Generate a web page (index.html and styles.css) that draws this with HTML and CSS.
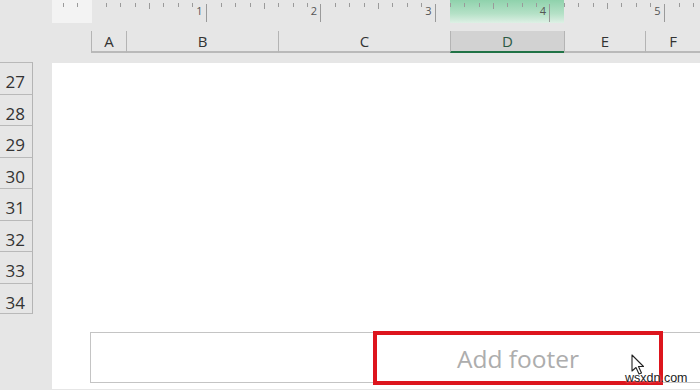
FILE: index.html
```html
<!DOCTYPE html>
<html lang="en">
<head>
    <meta charset="UTF-8">
    <meta name="viewport" content="width=device-width, initial-scale=1.0">
    <title>Page Layout - Add footer</title>
    <link rel="stylesheet" href="styles.css">
</head>
<body>
    <div class="sheet">
        <div class="ruler">
            <div class="ruler-margin"></div>
            <div class="ruler-scale">
                <div class="ruler-mark"></div>
                <div class="inch"><span>1</span></div>
                <div class="inch"><span>2</span></div>
                <div class="inch"><span>3</span></div>
                <div class="inch"><span>4</span></div>
                <div class="inch"><span>5</span></div>
                <div class="inch"></div>
            </div>
        </div>

        <div class="col-headers">
            <div class="col col-a">A</div>
            <div class="col col-b">B</div>
            <div class="col col-c">C</div>
            <div class="col col-d selected">D</div>
            <div class="col col-e">E</div>
            <div class="col col-f">F</div>
        </div>

        <div class="grid-body">
            <div class="row-headers">
                <div class="row-head">27</div>
                <div class="row-head">28</div>
                <div class="row-head">29</div>
                <div class="row-head">30</div>
                <div class="row-head">31</div>
                <div class="row-head">32</div>
                <div class="row-head">33</div>
                <div class="row-head">34</div>
            </div>
            <div class="page">
                <div class="footer">
                    <div class="footer-left"></div>
                    <div class="footer-center">Add footer</div>
                    <div class="footer-right"></div>
                </div>
            </div>
        </div>

        <!-- mouse pointer over the footer -->
        <svg class="cursor" width="14" height="22" viewBox="0 0 14 22">
            <path d="M1 1 L1 17 L5 13.5 L8 20 L10.5 19 L7.5 12.5 L12.5 12.5 Z" fill="#fff" stroke="#222" stroke-width="1.1" stroke-linejoin="round"/>
        </svg>
        <div class="watermark">wsxdn.com</div>
    </div>
</body>
</html>
```

FILE: styles.css
```css
html, body {
    margin: 0;
    padding: 0;
}

body {
    width: 700px;
    height: 390px;
    overflow: hidden;
    background-color: #e6e6e6;
    font-family: "Open Sans", "Noto Sans", sans-serif;
}

.sheet {
    position: relative;
    width: 700px;
    height: 390px;
}

/* Ruler along the top */
.ruler {
    display: flex;
    height: 23px;
    padding-left: 52px;
}

.ruler-margin {
    width: 40px;
    height: 23px;
    background:
        linear-gradient(#9a9a9a, #9a9a9a) 11px 3px / 1px 4px no-repeat,
        linear-gradient(#9a9a9a, #9a9a9a) 25px 3px / 1px 4px no-repeat,
        #f3f3f3;
}

.ruler-scale {
    position: relative;
    display: flex;
    flex: 1;
    overflow: hidden;
}

/* Green band over the selected column */
.ruler-mark {
    position: absolute;
    left: 358px;
    top: 0;
    width: 114px;
    height: 23px;
    background: linear-gradient(to bottom, #8fd2ac 0%, #b5e1c7 60%, #def0e5 100%);
}

.inch {
    position: relative;
    flex: 0 0 114.5px;
    height: 23px;
    display: flex;
    justify-content: flex-end;
    align-items: flex-start;
    background:
        linear-gradient(#9a9a9a, #9a9a9a) 14px 3px / 1px 4px no-repeat,
        linear-gradient(#9a9a9a, #9a9a9a) 28px 3px / 1px 4px no-repeat,
        linear-gradient(#9a9a9a, #9a9a9a) 43px 3px / 1px 4px no-repeat,
        linear-gradient(#9a9a9a, #9a9a9a) 57px 3px / 1px 6px no-repeat,
        linear-gradient(#9a9a9a, #9a9a9a) 71px 3px / 1px 4px no-repeat,
        linear-gradient(#9a9a9a, #9a9a9a) 86px 3px / 1px 4px no-repeat,
        linear-gradient(#9a9a9a, #9a9a9a) 100px 3px / 1px 4px no-repeat;
}

.inch span {
    margin-top: 4px;
    height: 18px;
    padding-right: 3px;
    border-right: 1px solid #9a9a9a;
    font-size: 11px;
    line-height: 13px;
    color: #555;
}

/* Column letters */
.col-headers {
    display: flex;
    margin-top: 8px;
    padding-left: 91px;
    height: 22px;
}

.col {
    box-sizing: border-box;
    height: 22px;
    border-left: 1px solid #b4b4b4;
    border-bottom: 2px solid #b9b9b9;
    text-align: center;
    font-size: 15px;
    line-height: 21px;
    color: #333;
}

.col-a { width: 35px; }
.col-b { width: 152px; }
.col-c { width: 172px; }
.col-d { width: 114px; }
.col-e { width: 81px; }
.col-f { flex: 1; }

.col.selected {
    background-color: #d2d2d2;
    border-bottom: 2px solid #217346;
    color: #2c5a44;
}

/* Row numbers and page */
.grid-body {
    display: flex;
    margin-top: 10px;
}

.row-headers {
    width: 33px;
    margin-top: -1px;
}

.row-head {
    box-sizing: border-box;
    height: 31.5px;
    border-top: 1px solid #b9b9b9;
    border-right: 1px solid #b4b4b4;
    text-align: right;
    padding-right: 7px;
    padding-top: 9px;
    font-size: 17px;
    line-height: 20px;
    color: #333;
}

.row-head:last-child {
    border-bottom: 1px solid #b9b9b9;
}

.page {
    flex: 1;
    margin-left: 19px;
    height: 326px;
    background-color: #fff;
    padding-top: 269px;
    padding-left: 38px;
    box-sizing: border-box;
}

.footer {
    display: flex;
    height: 51px;
    border: 1px solid #c4c4c4;
    border-right: none;
    box-sizing: border-box;
}

.footer-left {
    width: 282px;
}

.footer-center {
    box-sizing: border-box;
    width: 290px;
    margin: -2px 0 -3px;
    border: 4px solid #dd151d;
    display: flex;
    align-items: center;
    justify-content: center;
    font-size: 24.5px;
    color: #adadad;
}

.footer-right {
    flex: 1;
}

.cursor {
    position: absolute;
    left: 631px;
    top: 354px;
}

.watermark {
    position: absolute;
    left: 625px;
    top: 371px;
    font-family: "Liberation Sans", Arial, sans-serif;
    font-size: 12.5px;
    line-height: 15px;
    color: #222;
    text-shadow: 0 0 2px #fff;
}
```
